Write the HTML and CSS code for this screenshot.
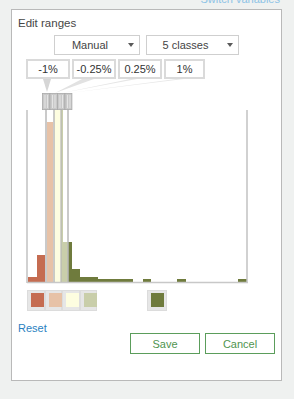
FILE: index.html
```html
<!DOCTYPE html>
<html lang="en">
<head>
    <meta charset="UTF-8">
    <meta name="viewport" content="width=device-width, initial-scale=1.0">
    <title>Edit ranges</title>
    <link rel="stylesheet" href="styles.css">
</head>
<body>
    <div class="topbar">
        <a class="switch_link">Switch variables</a>
    </div>

    <div class="panel">
        <div class="panel_title">Edit ranges</div>

        <div class="selects">
            <div class="select sel_method"><span class="sel_text">Manual</span><span class="caret"></span></div>
            <div class="select sel_classes"><span class="sel_text">5 classes</span><span class="caret"></span></div>
        </div>

        <div class="breaks">
            <div class="break_box">-1%</div>
            <div class="break_box">-0.25%</div>
            <div class="break_box">0.25%</div>
            <div class="break_box">1%</div>
        </div>

        <!-- histogram: viewBox uses page coordinates so the numbers read straight off the picture -->
        <svg class="histogram" width="269" height="205" viewBox="12 79 269 205">
            <!-- connectors from the break labels to the handles -->
            <polygon points="43,79 51,79 47,92" fill="#d6d6d6"/>
            <polygon points="82,79 94,79 55,93" fill="#e2e2e2"/>
            <polygon points="130,79 137,79 62,93" fill="#e6e6e6"/>
            <polygon points="176,79 184,79 69,93" fill="#e8e8e8"/>

            <!-- bars -->
            <rect x="28" y="277" width="9" height="5" fill="#c56c51"/>
            <rect x="37" y="255" width="8" height="27" fill="#c56c51"/>
            <rect x="47" y="122" width="6" height="160" fill="#e7c2a7"/>
            <rect x="54" y="110" width="7" height="172" fill="#fdfde0"/>
            <rect x="61" y="110" width="2" height="172" fill="#c9ceaa"/>
            <rect x="63" y="242" width="5" height="40" fill="#c9ceaa"/>
            <rect x="68" y="242" width="4" height="40" fill="#6f7b3d"/>
            <rect x="72" y="269" width="8" height="13" fill="#6f7b3d"/>
            <rect x="80" y="277" width="18" height="5" fill="#6f7b3d"/>
            <rect x="98" y="279" width="35" height="3" fill="#6f7b3d"/>
            <rect x="143" y="279" width="8" height="3" fill="#6f7b3d"/>
            <rect x="177" y="279" width="9" height="3" fill="#6f7b3d"/>
            <rect x="238" y="279" width="9" height="3" fill="#6f7b3d"/>

            <!-- frame -->
            <line x1="27" y1="110" x2="27" y2="283" stroke="#c2c2c2" stroke-width="1.5"/>
            <line x1="247" y1="110" x2="247" y2="283" stroke="#c2c2c2" stroke-width="1.5"/>
            <line x1="27" y1="282.5" x2="248" y2="282.5" stroke="#c8c8c8" stroke-width="1.5"/>

            <!-- break lines -->
            <line x1="46" y1="109" x2="46" y2="282" stroke="#b8b8b8" stroke-width="1.5"/>
            <line x1="54" y1="109" x2="54" y2="282" stroke="#b8b8b8" stroke-width="1.5"/>
            <line x1="61" y1="109" x2="61" y2="282" stroke="#b8b8b8" stroke-width="1.2"/>
            <line x1="68" y1="109" x2="68" y2="282" stroke="#b8b8b8" stroke-width="1.5"/>

            <!-- handles -->
            <g stroke="#a9a9a9" stroke-width="0.8" fill="#c9c9c9">
                <rect x="42.4" y="93.4" width="7.5" height="16.2"/>
                <rect x="49.9" y="93.4" width="7.5" height="16.2"/>
                <rect x="57.4" y="93.4" width="7.5" height="16.2"/>
                <rect x="64.9" y="93.4" width="7" height="16.2"/>
            </g>
            <g stroke="#e4e4e4" stroke-width="1">
                <line x1="45" y1="95" x2="45" y2="108"/>
                <line x1="47.5" y1="95" x2="47.5" y2="108"/>
                <line x1="52.5" y1="95" x2="52.5" y2="108"/>
                <line x1="55" y1="95" x2="55" y2="108"/>
                <line x1="60" y1="95" x2="60" y2="108"/>
                <line x1="62.5" y1="95" x2="62.5" y2="108"/>
                <line x1="67.5" y1="95" x2="67.5" y2="108"/>
                <line x1="70" y1="95" x2="70" y2="108"/>
            </g>
        </svg>

        <div class="swatches">
            <div class="swatch"><span class="chip chip_1"></span></div>
            <div class="swatch"><span class="chip chip_2"></span></div>
            <div class="swatch"><span class="chip chip_3"></span></div>
            <div class="swatch"><span class="chip chip_4"></span></div>
            <div class="swatch swatch_last"><span class="chip chip_5"></span></div>
        </div>

        <a class="reset_link">Reset</a>

        <div class="actions">
            <button class="btn">Save</button>
            <button class="btn">Cancel</button>
        </div>
    </div>
</body>
</html>
```

FILE: styles.css
```css
* {
    padding: 0;
    margin: 0;
    box-sizing: border-box;
}

body {
    background-color: #eff1f0;
    font-family: "Liberation Sans", Arial, sans-serif;
    color: #444;
}

.topbar {
    display: flex;
    justify-content: flex-end;
    align-items: flex-end;
    width: 281px;
    height: 9px;
    padding-right: 1px;
}

.switch_link {
    font-size: 11px;
    line-height: 12px;
    margin-bottom: 4px;
    color: #8ec3e6;
    white-space: nowrap;
}

.panel {
    display: flex;
    flex-direction: column;
    width: 271px;
    height: 372px;
    margin-left: 11px;
    background-color: #fff;
    border: 1px solid #b9b9b9;
}

.panel_title {
    margin-top: 6px;
    padding-left: 6px;
    font-size: 11.5px;
    line-height: 14px;
    color: #464646;
}

/* dropdowns */
.selects {
    display: flex;
    gap: 6px;
    margin-top: 5px;
    padding-left: 42px;
}

.select {
    display: flex;
    align-items: center;
    height: 20px;
    padding-right: 5px;
    border: 1px solid #cfcfcf;
    font-size: 11px;
    color: #444;
}

.sel_method { width: 86px; }
.sel_classes { width: 93px; }

.sel_text {
    flex: 1;
    text-align: center;
}

.caret {
    width: 0;
    height: 0;
    margin-left: 3px;
    border-left: 3px solid transparent;
    border-right: 3px solid transparent;
    border-top: 4px solid #5a5a5a;
}

/* break values */
.breaks {
    display: grid;
    grid-template-columns: 44px 44px 44px 41px;
    column-gap: 2px;
    margin-top: 4px;
    padding-left: 14px;
}

.break_box {
    height: 20px;
    border: 2px solid #dadada;
    font-size: 11px;
    line-height: 16px;
    text-align: center;
    color: #333;
}

.histogram {
    display: block;
}

/* legend swatches */
.swatches {
    display: flex;
    margin-top: 6px;
    padding-left: 15px;
}

.swatch {
    width: 17.5px;
    height: 21px;
    padding: 3px 0 0 3px;
    background-color: #e6e6e6;
    border: 1px solid #dcdcdc;
}

.swatch_last {
    width: 20px;
    margin-left: 50px;
    padding-left: 3px;
}

.chip {
    display: block;
    width: 13px;
    height: 14px;
    margin-top: -1px;
}

.chip_1 { background-color: #c56c51; }
.chip_2 { background-color: #e7c2a7; }
.chip_3 { background-color: #fdfde0; }
.chip_4 { background-color: #c9ceaa; }
.chip_5 { background-color: #6f7b3d; }

.reset_link {
    margin-top: 11px;
    padding-left: 6px;
    font-size: 11px;
    line-height: 13px;
    color: #2a7fc1;
    cursor: pointer;
}

.actions {
    display: flex;
    justify-content: flex-end;
    gap: 5px;
    margin-top: -2px;
    padding-right: 6px;
}

.btn {
    width: 70px;
    height: 21px;
    background-color: #fff;
    border: 1px solid #5b9d5b;
    font-family: "Liberation Sans", Arial, sans-serif;
    font-size: 11px;
    color: #4f944f;
    cursor: pointer;
}
```
